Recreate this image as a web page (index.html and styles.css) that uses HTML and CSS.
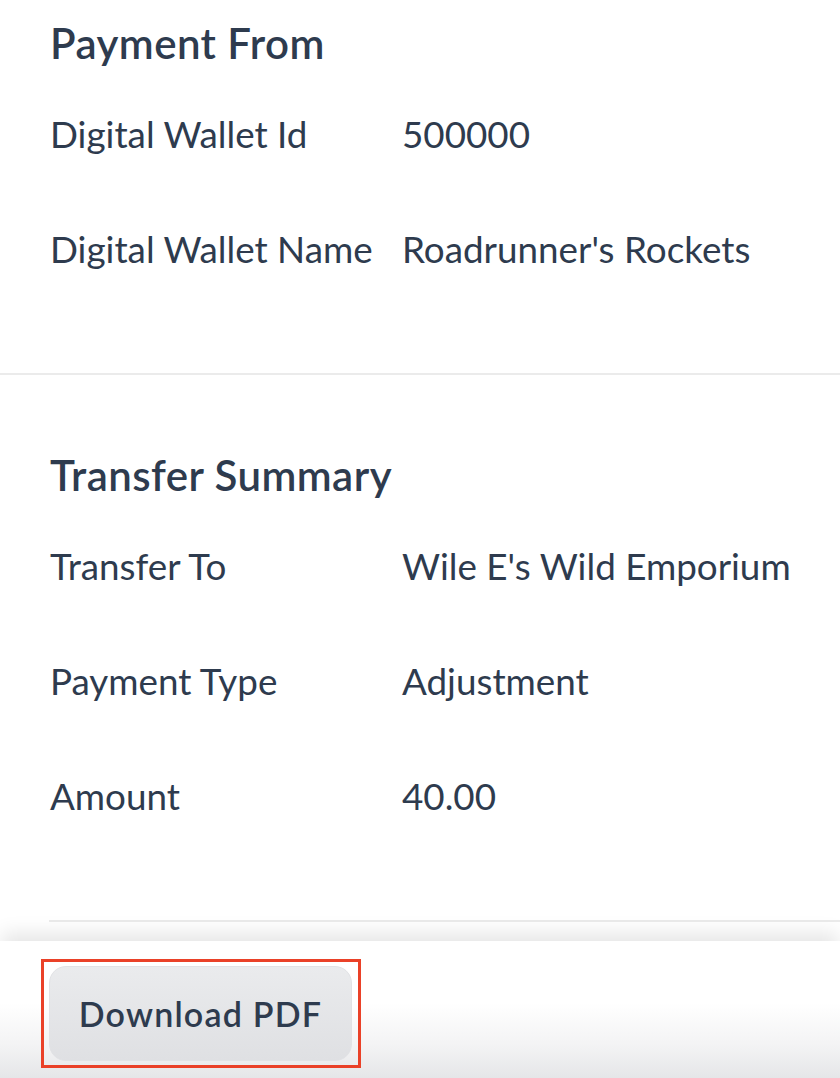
FILE: index.html
```html
<!DOCTYPE html>
<html lang="en">
<head>
<meta charset="utf-8">
<title>Transfer Receipt</title>
<link rel="stylesheet" href="styles.css">
</head>
<body>
<main class="receipt">
  <section class="section section-first">
    <h2 class="section-title">Payment From</h2>
    <div class="row">
      <span class="label">Digital Wallet Id</span>
      <span class="value">500000</span>
    </div>
    <div class="row">
      <span class="label">Digital Wallet Name</span>
      <span class="value">Roadrunner's Rockets</span>
    </div>
  </section>
  <hr class="divider">
  <section class="section">
    <h2 class="section-title">Transfer Summary</h2>
    <div class="row">
      <span class="label">Transfer To</span>
      <span class="value">Wile E's Wild Emporium</span>
    </div>
    <div class="row">
      <span class="label">Payment Type</span>
      <span class="value">Adjustment</span>
    </div>
    <div class="row">
      <span class="label">Amount</span>
      <span class="value">40.00</span>
    </div>
  </section>
  <hr class="divider divider-inset">
</main>
<footer class="footer">
  <div class="highlight">
    <button class="btn" type="button">Download PDF</button>
  </div>
</footer>
</body>
</html>
```
FILE: styles.css
```css
html, body {
  margin: 0;
  padding: 0;
  background: #ffffff;
}

body {
  font-family: Lato, "Noto Sans", sans-serif;
  color: #2e3b4e;
  height: 1078px;
  overflow: hidden;
}

.receipt {
  padding-bottom: 19px;
}

.section {
  padding: 72px 0 72px 50px;
}

.section-first {
  padding-top: 15px;
}

.section-title {
  margin: 0;
  font-size: 42px;
  font-weight: 600;
  line-height: 56px;
  letter-spacing: 0.45px;
  white-space: nowrap;
}

.row {
  display: grid;
  grid-template-columns: 352px 1fr;
  padding: 39px 0 28px;
  font-size: 36.8px;
  line-height: 48px;
  white-space: nowrap;
}

.divider {
  margin: 0;
  border: 0;
  height: 2px;
  background: #ebebeb;
}

.divider-inset {
  margin-left: 49px;
}

.footer {
  height: 137px;
  box-sizing: border-box;
  padding: 18px 0 0 41px;
  background: linear-gradient(to bottom, #ffffff 0px, #ffffff 62px, #f3f3f4 105px, #e5e6e8 137px);
  box-shadow: 0 -10px 18px -2px rgba(0, 0, 0, 0.1);
}

.highlight {
  display: inline-block;
  border: 3px solid #ea4128;
  padding: 4px 6px 4px 5px;
}

.btn {
  display: block;
  width: 303px;
  height: 95px;
  border: 1px solid #e1e2e5;
  border-radius: 17px;
  background: linear-gradient(to bottom, #eaebed, #dfe0e3);
  font-family: Lato, "Noto Sans", sans-serif;
  font-size: 34px;
  font-weight: 600;
  color: #2e3b4e;
  letter-spacing: 1.2px;
  padding: 0;
  cursor: pointer;
}
```
